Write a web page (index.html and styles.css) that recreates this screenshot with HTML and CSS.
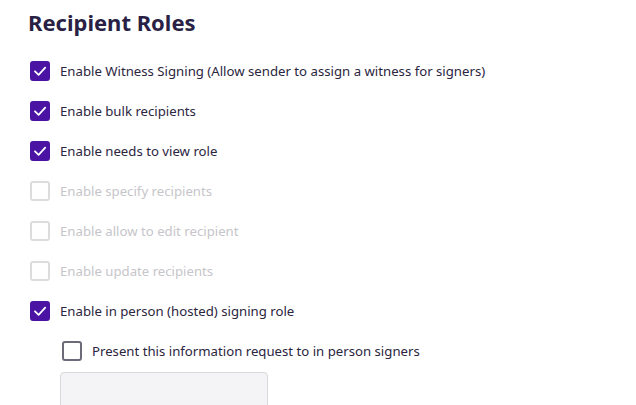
FILE: index.html
```html
<!DOCTYPE html>
<html>
<head>
<meta charset="utf-8">
<link rel="stylesheet" href="styles.css">
</head>
<body>
<div class="panel">
  <h2 class="title">Recipient Roles</h2>
  <ul class="options">
    <li class="option"><span class="box checked"><svg viewBox="0 0 20 20"><path d="M5 10.3 L8.6 13.8 L15.2 6.6" /></svg></span><span class="label">Enable Witness Signing (Allow sender to assign a witness for signers)</span></li>
    <li class="option"><span class="box checked"><svg viewBox="0 0 20 20"><path d="M5 10.3 L8.6 13.8 L15.2 6.6" /></svg></span><span class="label">Enable bulk recipients</span></li>
    <li class="option"><span class="box checked"><svg viewBox="0 0 20 20"><path d="M5 10.3 L8.6 13.8 L15.2 6.6" /></svg></span><span class="label">Enable needs to view role</span></li>
    <li class="option disabled"><span class="box"></span><span class="label">Enable specify recipients</span></li>
    <li class="option disabled"><span class="box"></span><span class="label">Enable allow to edit recipient</span></li>
    <li class="option disabled"><span class="box"></span><span class="label">Enable update recipients</span></li>
    <li class="option"><span class="box checked"><svg viewBox="0 0 20 20"><path d="M5 10.3 L8.6 13.8 L15.2 6.6" /></svg></span><span class="label">Enable in person (hosted) signing role</span></li>
  </ul>
  <div class="sub">
    <div class="option"><span class="box empty"></span><span class="label">Present this information request to in person signers</span></div>
    <div class="field"></div>
  </div>
</div>
</body>
</html>
```
FILE: styles.css
```css
html, body {
  margin: 0;
  padding: 0;
  background: #ffffff;
}
body {
  font-family: "Noto Sans", "Liberation Sans", sans-serif;
  color: #2b2540;
}
.panel {
  padding: 8px 0 0 28px;
}
.title {
  margin: 0;
  font-size: 22px;
  font-weight: 700;
  line-height: 28px;
  color: #2a1f45;
}
.options {
  list-style: none;
  margin: 25px 0 0 0;
  padding: 0;
  display: flex;
  flex-direction: column;
  gap: 20px;
}
.option {
  display: flex;
  align-items: center;
  gap: 10px;
  height: 20px;
  padding-left: 2px;
}
.box {
  width: 20px;
  height: 20px;
  box-sizing: border-box;
  border-radius: 3px;
  border: 2px solid #dcdcdf;
  flex: none;
  display: flex;
}
.box.checked {
  background: #4b13a3;
  border-color: #4b13a3;
}
.box svg {
  width: 20px;
  height: 20px;
  margin: -2px;
}
.box svg path {
  fill: none;
  stroke: #ffffff;
  stroke-width: 1.8;
  stroke-linecap: round;
  stroke-linejoin: round;
}
.box.empty {
  border-color: #6f6a7a;
}
.label {
  font-size: 13.2px;
  line-height: 20px;
}
.disabled .label {
  color: #c6c5ca;
}
.sub {
  margin: 20px 0 0 32px;
}
.field {
  margin-top: 11px;
  width: 208px;
  height: 50px;
  box-sizing: border-box;
  background: #f4f4f6;
  border: 1px solid #d8d8dc;
  border-radius: 4px;
}
```
